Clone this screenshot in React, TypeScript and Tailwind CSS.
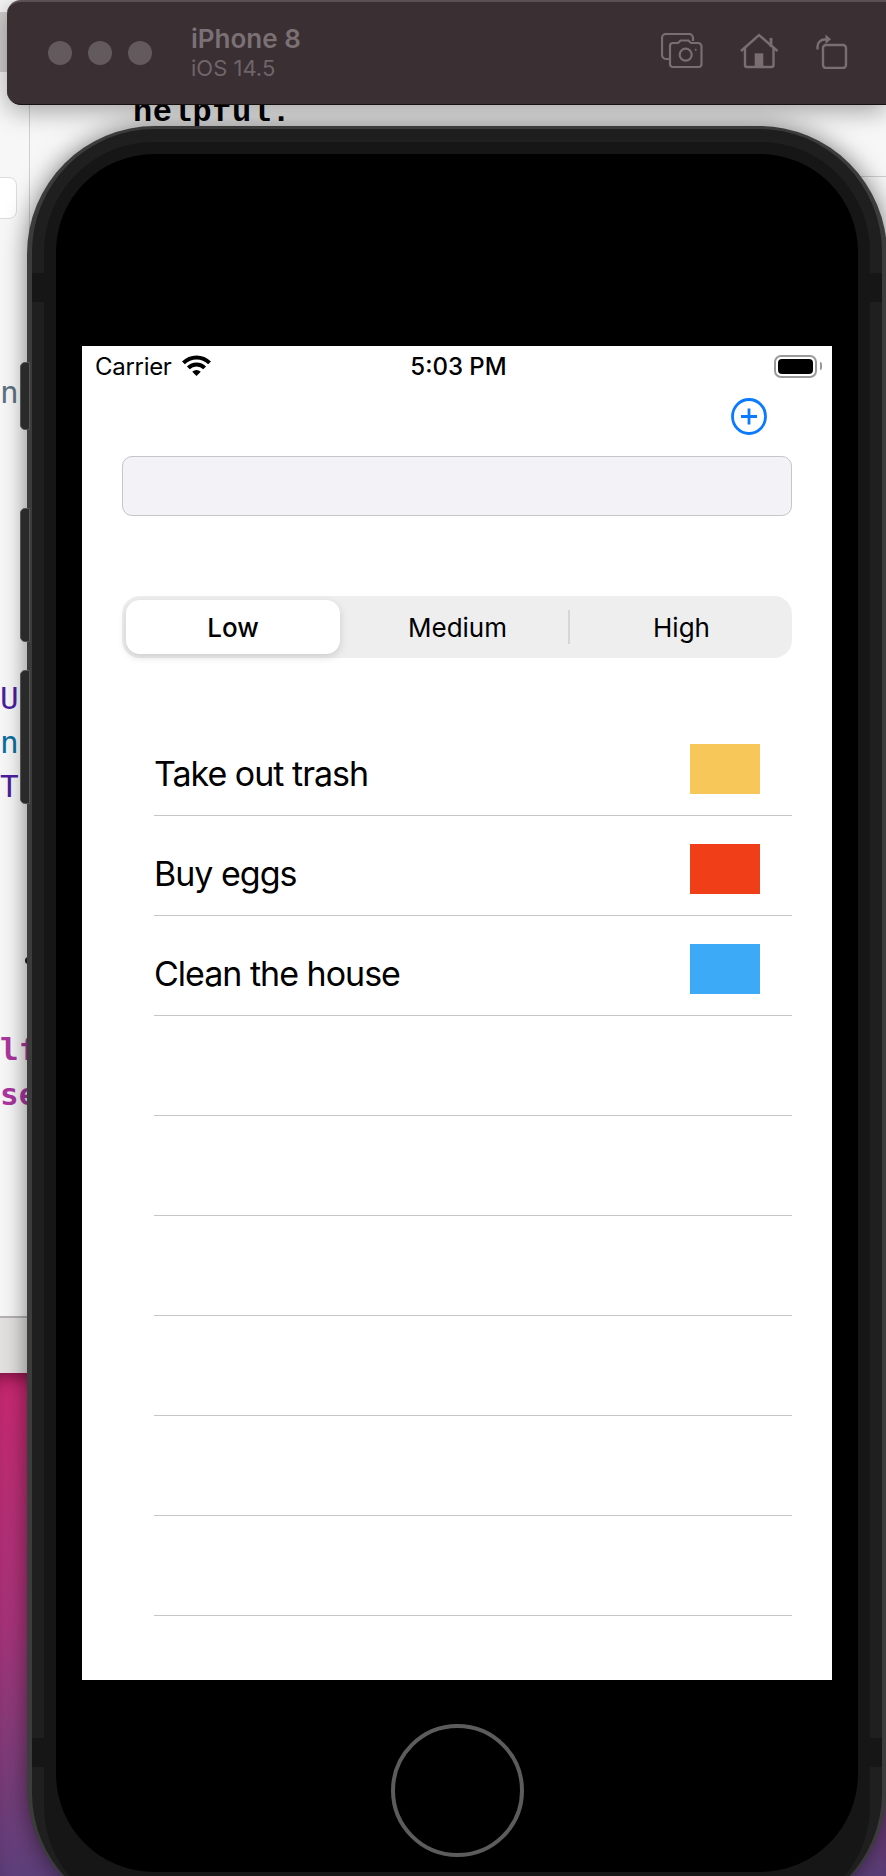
const sans = "font-['Inter','Noto_Sans',sans-serif]";
const mono = "font-['DejaVu_Sans_Mono','Liberation_Mono',monospace]";

const tasks = [
  { title: "Take out trash", color: "bg-[#f7c859]" },
  { title: "Buy eggs", color: "bg-[#f03e19]" },
  { title: "Clean the house", color: "bg-[#3daaf8]" },
  { title: "" },
  { title: "" },
  { title: "" },
  { title: "" },
  { title: "" },
  { title: "" },
];

function CameraIcon() {
  return (
    <svg width="43" height="36" viewBox="0 0 43 36" fill="none" stroke="#7a6e72" strokeWidth="2.2">
      <path d="M8 26H5a4 4 0 0 1-4-4V5a4 4 0 0 1 4-4h23a4 4 0 0 1 4 4v3" />
      <path d="M12 10h5l2.500-2.500h8L30 10h7a3.500 3.500 0 0 1 3.500 3.500V31a3 3 0 0 1-3 3H12a3 3 0 0 1-3-3V13a3 3 0 0 1 3-3z" />
      <circle cx="24.700" cy="21.700" r="6" />
      <circle cx="34.700" cy="16.700" r="1" fill="#7a6e72" stroke="none" />
    </svg>
  );
}

function HomeIcon() {
  return (
    <svg width="39" height="36" viewBox="0 0 39 36" fill="none" stroke="#7a6e72" strokeWidth="2.400">
      <path d="M1 18 19 2l18.500 16" />
      <path d="M5 14.500V32a2 2 0 0 0 2 2h24.500a2 2 0 0 0 2-2V14.500" />
      <path d="M31 5v9" strokeWidth="2.800" />
      <path d="M14.700 20.300h8.600v14h-8.600z" fill="#7a6e72" stroke="none" />
    </svg>
  );
}

function RotateIcon() {
  return (
    <svg width="33" height="36" viewBox="0 0 33 36" fill="none" stroke="#7a6e72" strokeWidth="2.400">
      <rect x="8" y="12" width="23" height="23" rx="3" />
      <path d="M2.500 16.500v-3a7 7 0 0 1 7-7H11" />
      <path d="M10.500 1.500 16 6.300l-5.500 4.800z" fill="#7a6e72" stroke="none" />
    </svg>
  );
}

function WifiIcon() {
  return (
    <svg width="29" height="22" viewBox="0 0 29 22" fill="none" stroke="#000" strokeWidth="4">
      <path d="M1.420 7.920A18.500 18.500 0 0 1 27.580 7.920" />
      <path d="M6.370 12.870A11.500 11.500 0 0 1 22.630 12.870" />
      <path d="M14.500 21 10.260 16.760A6 6 0 0 1 18.740 16.760z" fill="#000" stroke="none" />
    </svg>
  );
}

function PlusIcon() {
  return (
    <svg width="36" height="37" viewBox="0 0 36 37" fill="none" stroke="#0a7aff" strokeWidth="2.800">
      <ellipse cx="18" cy="18.500" rx="16.500" ry="17" />
      <path d="M10 18.500h16M18 10.500v16" />
    </svg>
  );
}

function Backdrop() {
  return (
    <div className="flex flex-col h-full">
      <div className="h-[1316px] bg-[#f7f7f7] relative overflow-hidden">
        <div className="absolute left-0 top-[12px] w-[8px] h-[60px] bg-[#d2cfcf]" />
        <div className="absolute left-[-20px] top-[177px] w-[37px] h-[42px] bg-white border border-[#dcdcdc] rounded-[8px]" />
        <div className="absolute left-[29px] top-0 w-px h-[300px] bg-[#cfcfcf]" />
        <div className="absolute left-[860px] right-0 top-[176px] h-px bg-[#cfcfcf]" />
        <div className="absolute left-[133px] top-[93px] text-[32px] leading-[40px] font-bold text-black font-['Liberation_Mono',monospace] tracking-[0.6px]">helpful.</div>
        <div className={`absolute left-0 top-[372px] text-[31px] leading-[40px] text-[#5d7180] ${mono}`}>n</div>
        <div className={`absolute left-0 top-[678px] text-[31px] leading-[40px] text-[#4a1fa0] ${mono}`}>U</div>
        <div className={`absolute left-0 top-[722px] text-[31px] leading-[40px] text-[#0b6e9e] ${mono}`}>n</div>
        <div className={`absolute left-0 top-[766px] text-[31px] leading-[40px] text-[#4a1fa0] ${mono}`}>T</div>
        <div className="absolute left-[25px] top-[957px] w-[5px] h-[7px] rounded-l-full bg-[#222]" />
        <div className={`absolute left-0 top-[1029px] text-[31px] leading-[40px] font-bold text-[#ab36a0] ${mono}`}>lf</div>
        <div className={`absolute left-0 top-[1074px] text-[31px] leading-[40px] font-bold text-[#ab36a0] ${mono}`}>se</div>
      </div>
      <div className="h-[57px] bg-[#e3e0e0] border-t-2 border-[#b4b2b2]" />
      <div className="flex-1 bg-linear-to-b from-[#cc2872] via-[#a9347c] to-[#5c3f7a] shadow-[inset_0_14px_18px_-10px_rgba(60,0,30,0.6)]" />
    </div>
  );
}

function TitleBar() {
  return (
    <div className={`absolute left-[7px] top-0 w-[879px] h-[105px] bg-[#3a2f33] rounded-l-[14px] border-t-2 border-t-[#5b5054] border-b border-b-[#17120f] shadow-[0_6px_26px_rgba(0,0,0,0.35)] flex items-center pl-[41px] pr-[38px] ${sans}`}>
      <div className="flex gap-4">
        <div className="w-6 h-6 rounded-full bg-[#635a5d]" />
        <div className="w-6 h-6 rounded-full bg-[#635a5d]" />
        <div className="w-6 h-6 rounded-full bg-[#635a5d]" />
      </div>
      <div className="ml-[39px] flex flex-col">
        <span className="text-[26px] leading-[30px] font-semibold text-[#7b7175]">iPhone 8</span>
        <span className="text-[22px] leading-[28px] text-[#6f6569]">iOS 14.5</span>
      </div>
      <div className="ml-auto flex items-center gap-[36px] mb-[4px]">
        <CameraIcon />
        <HomeIcon />
        <RotateIcon />
      </div>
    </div>
  );
}

function Screen() {
  return (
    <div className={`w-[750px] h-[1334px] bg-white shrink-0 flex flex-col ${sans}`}>
      <div className="h-[40px] grid grid-cols-3 items-center pl-[13px] pr-[10px]">
        <div className="flex items-center gap-[10px]">
          <span className="text-[24px] leading-[30px] tracking-[-0.3px] text-black mt-[2px]">Carrier</span>
          <WifiIcon />
        </div>
        <span className="text-[24px] leading-[30px] font-medium text-black text-center mt-[2px]">5:03 PM</span>
        <div className="flex items-center justify-end">
          <div className="w-[43px] h-[23px] rounded-[7px] border-2 border-[#9a9a9a] p-[2px]">
            <div className="w-full h-full rounded-[4px] bg-black" />
          </div>
          <div className="w-[2px] h-[8px] ml-[3px] bg-[#9a9a9a] rounded-r-sm" />
        </div>
      </div>
      <div className="flex justify-end pt-[12px] pr-[65px]">
        <PlusIcon />
      </div>
      <div className="mt-[21px] mx-[40px] h-[60px] rounded-[10px] bg-[#f2f2f7] border border-[#c5c5ca]" />
      <div className="mt-[80px] mx-[40px] h-[62px] rounded-[18px] bg-[#eeeeef] p-[4px] grid grid-cols-[214px_230px_218px] items-center text-[26px] text-black">
        <div className="h-[54px] rounded-[14px] bg-white shadow-[0_3px_8px_rgba(0,0,0,0.14)] flex items-center justify-center font-medium">Low</div>
        <div className="h-[34px] flex items-center justify-center pl-[7px] border-r-2 border-[#d6d6d8]">Medium</div>
        <div className="flex items-center justify-center pl-[5px]">High</div>
      </div>
      <div className="mt-[58px] ml-[72px] mr-[40px] flex flex-col">
        {tasks.map((task, i) => (
          <div key={i} className="h-[100px] border-b border-[#c6c6c8] flex items-center justify-between pr-[32px] pt-[7px]">
            <span className="text-[34px] leading-[40px] tracking-[-1px] text-black mt-[10px]">{task.title}</span>
            {task.color && <div className={`w-[70px] h-[50px] ${task.color}`} />}
          </div>
        ))}
      </div>
    </div>
  );
}

function Phone() {
  return (
    <div className="absolute left-[27px] top-[126px] w-[860px] h-[1790px] rounded-[128px] bg-[#3c3c3c] pt-[3px] px-[5px] shadow-[0_0_24px_rgba(0,0,0,0.5)]">
      <div className="absolute left-[-7px] top-[236px] w-[10px] h-[68px] rounded-l-[5px] bg-[#2a2a2a] border border-[#555]" />
      <div className="absolute left-[-7px] top-[382px] w-[10px] h-[134px] rounded-l-[5px] bg-[#2a2a2a] border border-[#555]" />
      <div className="absolute left-[-7px] top-[544px] w-[10px] h-[134px] rounded-l-[5px] bg-[#2a2a2a] border border-[#555]" />
      <div className="h-full rounded-[123px] bg-[#1f1f1f] pt-[13px] px-[12px] relative">
        <div className="absolute left-0 top-[144px] w-[12px] h-[29px] bg-[#161616]" />
        <div className="absolute right-0 top-[144px] w-[12px] h-[29px] bg-[#161616]" />
        <div className="absolute left-0 top-[1609px] w-[12px] h-[29px] bg-[#161616]" />
        <div className="absolute right-0 top-[1609px] w-[12px] h-[29px] bg-[#161616]" />
        <div className="h-full rounded-[110px] bg-[#161616] pt-[12px] px-[12px]">
          <div className="h-[1718px] rounded-[98px] bg-black pt-[192px] flex flex-col items-center">
            <Screen />
            <div className="mt-[44px] w-[133px] h-[133px] rounded-full border-[4px] border-[#5c5c5c]" />
          </div>
        </div>
      </div>
    </div>
  );
}

export default function App() {
  return (
    <div className="relative w-[886px] h-[1876px] overflow-hidden">
      <Backdrop />
      <Phone />
      <TitleBar />
    </div>
  );
}
